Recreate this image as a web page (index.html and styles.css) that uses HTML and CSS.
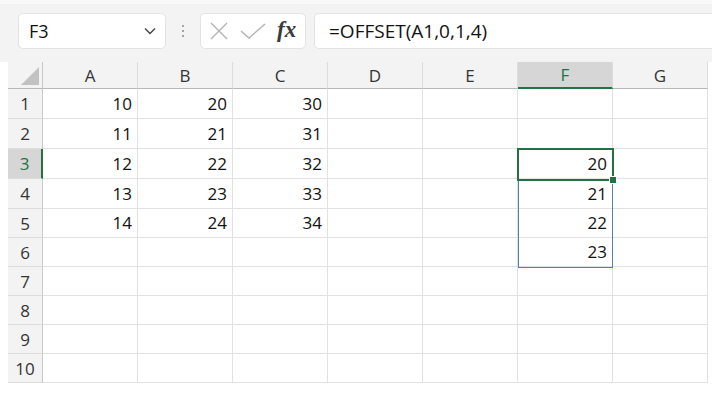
FILE: index.html
```html
<!DOCTYPE html>
<html lang="en">
<head>
    <meta charset="UTF-8">
    <title>OFFSET example</title>
    <link rel="stylesheet" href="styles.css">
</head>
<body>

<div class="app">
    <!-- Formula bar -->
    <div class="toolbar">
        <div class="namebox">
            <span>F3</span>
            <svg class="chevron" width="12" height="8" viewBox="0 0 12 8"><path d="M1 1.5 L6 6.5 L11 1.5" fill="none" stroke="#444" stroke-width="1.4"/></svg>
        </div>
        <div class="dots"><i></i><i></i><i></i></div>
        <div class="fxbox">
            <svg width="20" height="18" viewBox="0 0 20 18"><path d="M2 1 L18 17 M18 1 L2 17" stroke="#b3b3b3" stroke-width="1.4" fill="none"/></svg>
            <svg width="26" height="16" viewBox="0 0 26 16"><path d="M1 8 L9 15 L25 1" stroke="#b3b3b3" stroke-width="1.4" fill="none"/></svg>
            <span class="fx">fx</span>
        </div>
        <div class="formula">=OFFSET(A1,0,1,4)</div>
    </div>

    <!-- Sheet -->
    <div class="sheet">
        <div class="corner"><span class="tri"></span></div>
        <div class="colhead">A</div>
        <div class="colhead">B</div>
        <div class="colhead">C</div>
        <div class="colhead">D</div>
        <div class="colhead">E</div>
        <div class="colhead active">F</div>
        <div class="colhead">G</div>

        <div class="rowhead">1</div>
        <div class="cell">10</div><div class="cell">20</div><div class="cell">30</div>
        <div class="cell"></div><div class="cell"></div><div class="cell"></div><div class="cell"></div>

        <div class="rowhead">2</div>
        <div class="cell">11</div><div class="cell">21</div><div class="cell">31</div>
        <div class="cell"></div><div class="cell"></div><div class="cell"></div><div class="cell"></div>

        <div class="rowhead active">3</div>
        <div class="cell">12</div><div class="cell">22</div><div class="cell">32</div>
        <div class="cell"></div><div class="cell"></div><div class="cell">20</div><div class="cell"></div>

        <div class="rowhead">4</div>
        <div class="cell">13</div><div class="cell">23</div><div class="cell">33</div>
        <div class="cell"></div><div class="cell"></div><div class="cell">21</div><div class="cell"></div>

        <div class="rowhead">5</div>
        <div class="cell">14</div><div class="cell">24</div><div class="cell">34</div>
        <div class="cell"></div><div class="cell"></div><div class="cell">22</div><div class="cell"></div>

        <div class="rowhead">6</div>
        <div class="cell"></div><div class="cell"></div><div class="cell"></div>
        <div class="cell"></div><div class="cell"></div><div class="cell">23</div><div class="cell"></div>

        <div class="rowhead">7</div>
        <div class="cell"></div><div class="cell"></div><div class="cell"></div>
        <div class="cell"></div><div class="cell"></div><div class="cell"></div><div class="cell"></div>

        <div class="rowhead">8</div>
        <div class="cell"></div><div class="cell"></div><div class="cell"></div>
        <div class="cell"></div><div class="cell"></div><div class="cell"></div><div class="cell"></div>

        <div class="rowhead">9</div>
        <div class="cell"></div><div class="cell"></div><div class="cell"></div>
        <div class="cell"></div><div class="cell"></div><div class="cell"></div><div class="cell"></div>

        <div class="rowhead">10</div>
        <div class="cell"></div><div class="cell"></div><div class="cell"></div>
        <div class="cell"></div><div class="cell"></div><div class="cell"></div><div class="cell"></div>

        <!-- Range highlight and active cell -->
        <div class="range"></div>
        <div class="active-cell"><span class="handle"></span></div>
    </div>
</div>

</body>
</html>
```

FILE: styles.css
```css
body {
    margin: 0;
    background: #fff;
    font-family: "Open Sans", "Noto Sans", sans-serif;
    color: #111;
}
.app {
    width: 712px;
}
.toolbar {
    height: 62px;
    box-sizing: border-box;
    background: #f3f3f3;
    border-top: 4px solid #f8f8f8;
    padding: 9px 0 0 18px;
    display: flex;
    align-items: flex-start;
}
.namebox,
.fxbox,
.formula {
    height: 36px;
    box-sizing: border-box;
    background: #fff;
    border: 1px solid #e3e3e3;
    border-radius: 5px;
    display: flex;
    align-items: center;
}
.namebox {
    width: 148px;
    padding: 0 9px 0 10px;
    justify-content: space-between;
    font-size: 18px;
}
.dots {
    width: 34px;
    display: flex;
    flex-direction: column;
    align-items: center;
    gap: 3px;
    padding-top: 12px;
}
.dots i {
    width: 2px;
    height: 2px;
    background: #8a8a8a;
    border-radius: 1px;
}
.fxbox {
    width: 106px;
    padding: 0 8px 0 8px;
    gap: 11px;
}
.fx {
    font-family: "Liberation Serif", "DejaVu Serif", serif;
    font-style: italic;
    font-weight: bold;
    font-size: 23px;
    color: #3a3a3a;
    margin-top: -3px;
}
.formula {
    margin-left: 8px;
    flex: 1;
    padding-left: 14px;
    font-size: 19px;
    border-right: none;
    border-radius: 5px 0 0 5px;
}
.sheet {
    position: relative;
    margin-left: 8px;
    width: 700px;
    display: grid;
    grid-template-columns: 35px repeat(7, 95px);
    grid-template-rows: 27px repeat(4, 30px) repeat(6, 29px);
    font-size: 17px;
}
.corner {
    background: #f3f3f3;
    border-right: 1px solid #c8c8c8;
    border-bottom: 1px solid #b8b8b8;
    position: relative;
}
.tri {
    position: absolute;
    right: 3px;
    bottom: 3px;
    width: 0;
    height: 0;
    border-left: 18px solid transparent;
    border-bottom: 18px solid #c2c2c2;
}
.colhead {
    background: #f3f3f3;
    border-right: 1px solid #dcdcdc;
    border-bottom: 1px solid #b8b8b8;
    display: flex;
    align-items: center;
    justify-content: center;
    color: #333;
}
.colhead.active {
    background: #d6d6d6;
    border-bottom: 2px solid #217346;
    color: #217346;
}
.rowhead {
    background: #f3f3f3;
    border-right: 1px solid #c8c8c8;
    border-bottom: 1px solid #dcdcdc;
    display: flex;
    align-items: center;
    justify-content: center;
    color: #333;
}
.rowhead.active {
    background: #d6d6d6;
    border-right: 2px solid #217346;
    color: #217346;
}
.cell {
    border-right: 1px solid #e1e1e1;
    border-bottom: 1px solid #e1e1e1;
    display: flex;
    align-items: flex-end;
    justify-content: flex-end;
    padding: 0 5px 3px 0;
}
.range {
    position: absolute;
    left: 510px;
    top: 86px;
    width: 95px;
    height: 120px;
    box-sizing: border-box;
    border: 1px solid #4f7bd3;
}
.active-cell {
    position: absolute;
    left: 509px;
    top: 86px;
    width: 97px;
    height: 33px;
    box-sizing: border-box;
    border: 2px solid #217346;
}
.handle {
    position: absolute;
    right: -5px;
    bottom: -5px;
    width: 6px;
    height: 6px;
    background: #217346;
    border: 1px solid #fff;
}
```
